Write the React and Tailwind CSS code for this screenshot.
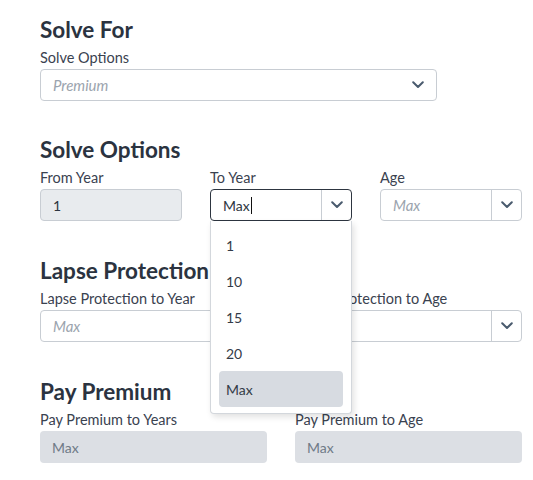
import React from "react";

// chevron used by every select box
const Chevron = () => (
  <svg width="12" height="8" viewBox="0 0 12 8" fill="none">
    <polyline points="1.2,1.2 6,6 10.8,1.2" stroke="#4a5b6e" strokeWidth="2" strokeLinecap="round" strokeLinejoin="round" />
  </svg>
);

const Heading = ({ children }) => (
  <h2 className="text-[22.5px] leading-[28px] font-bold text-[#2b3340]">{children}</h2>
);

const Label = ({ children }) => (
  <div className="mt-[5px] text-[14.5px] leading-[18px] text-[#3a4250] whitespace-nowrap">{children}</div>
);

const SelectBox = ({ placeholder, divided = true, className = "" }) => (
  <div className={`mt-[2px] flex h-8 items-stretch rounded border border-[#c8cdd3] bg-white ${className}`}>
    <div className="flex flex-1 items-center px-3 text-[15px] italic text-[#9ba4ae]">{placeholder}</div>
    <div className={`flex w-[30px] items-center justify-center ${divided ? "border-l border-[#c8cdd3]" : "mr-[3px]"}`}>
      <Chevron />
    </div>
  </div>
);

const DisabledBox = ({ value, bordered }) => (
  <div
    className={`mt-[2px] flex h-8 items-center rounded px-3 text-[14px] ${
      bordered ? "border border-[#c8cdd3] bg-[#e8ebee] text-[#2d3540]" : "bg-[#dcdfe4] text-[#6f7a87]"
    }`}
  >
    {value}
  </div>
);

const OPTIONS = ["1", "10", "15", "20", "Max"];

const App = () => {
  return (
    <div className="min-h-screen bg-white" style={{ fontFamily: "Lato, 'Open Sans', sans-serif" }}>
      <div className="ml-10 w-[482px] pt-[16px]">
        {/* Solve For */}
        <section>
          <Heading>Solve For</Heading>
          <Label>Solve Options</Label>
          <SelectBox placeholder="Premium" divided={false} className="w-[397px]" />
        </section>

        {/* Solve Options */}
        <section className="mt-[35px]">
          <Heading>Solve Options</Heading>
          <div className="grid grid-cols-3 gap-x-7">
            <div>
              <Label>From Year</Label>
              <DisabledBox value="1" bordered />
            </div>
            <div className="relative z-10">
              <Label>To Year</Label>
              <div className="mt-[2px] flex h-8 items-stretch rounded border border-[#2d3540] bg-white">
                <div className="flex flex-1 items-center pl-3 text-[14px] text-[#2d3540]">
                  Max
                  <span className="ml-px h-[17px] w-px bg-[#111]" />
                </div>
                <div className="flex w-[30px] items-center justify-center border-l border-[#c8cdd3]">
                  <Chevron />
                </div>
              </div>
              <ul className="absolute left-0 right-0 top-full rounded-b border border-t-0 border-[#d3d7dc] bg-white px-2 pb-[6px] pt-[6px] shadow-[2px_3px_6px_rgba(0,0,0,0.12)]">
                {OPTIONS.map((opt) => (
                  <li
                    key={opt}
                    className={`flex h-9 items-center rounded px-[7px] text-[14px] text-[#333b47] ${
                      opt === "Max" ? "bg-[#d7dbe1]" : ""
                    }`}
                  >
                    {opt}
                  </li>
                ))}
              </ul>
            </div>
            <div>
              <Label>Age</Label>
              <SelectBox placeholder="Max" />
            </div>
          </div>
        </section>

        {/* Lapse Protection */}
        <section className="mt-[36px]">
          <Heading>Lapse Protection</Heading>
          <div className="grid grid-cols-2 gap-x-7">
            <div>
              <Label>Lapse Protection to Year</Label>
              <div className="mt-[2px] flex h-8 items-center rounded border border-[#c8cdd3] bg-white px-3 text-[15px] italic text-[#9ba4ae]">
                Max
              </div>
            </div>
            <div>
              <Label>Lapse Protection to Age</Label>
              <SelectBox placeholder="Max" />
            </div>
          </div>
        </section>

        {/* Pay Premium */}
        <section className="mt-[36px]">
          <Heading>Pay Premium</Heading>
          <div className="grid grid-cols-2 gap-x-7">
            <div>
              <Label>Pay Premium to Years</Label>
              <DisabledBox value="Max" />
            </div>
            <div>
              <Label>Pay Premium to Age</Label>
              <DisabledBox value="Max" />
            </div>
          </div>
        </section>
      </div>
    </div>
  );
};

export default App;
